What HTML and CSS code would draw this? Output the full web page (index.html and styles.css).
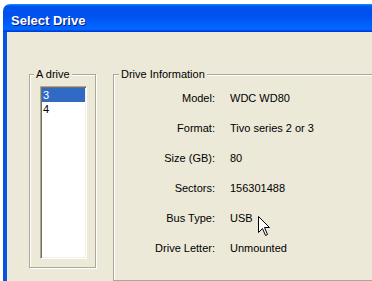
FILE: index.html
```html
<!DOCTYPE html>
<html lang="en">
<head>
  <meta charset="UTF-8">
  <title>Select Drive</title>
  <link rel="stylesheet" href="styles.css">
</head>
<body>
  <div class="window">
    <div class="title-bar">Select Drive</div>
    <div class="client">
      <fieldset class="group drives">
        <legend>A drive</legend>
        <ul class="listbox">
          <li class="selected">3</li>
          <li>4</li>
        </ul>
      </fieldset>

      <fieldset class="group info">
        <legend>Drive Information</legend>
        <div class="info-grid">
          <span class="label">Model:</span><span>WDC WD80</span>
          <span class="label">Format:</span><span>Tivo series 2 or 3</span>
          <span class="label">Size (GB):</span><span>80</span>
          <span class="label">Sectors:</span><span>156301488</span>
          <span class="label">Bus Type:</span><span>USB</span>
          <span class="label">Drive Letter:</span><span>Unmounted</span>
        </div>
      </fieldset>
    </div>
  </div>

  <!-- mouse pointer -->
  <svg class="cursor" width="13" height="21" viewBox="0 0 13 21">
    <polygon points="0.5,0.5 0.5,16.5 4.5,12.5 7.5,19.5 9.5,18.5 6.5,11.5 11.5,11.5" fill="#fff" stroke="#000" stroke-width="1" stroke-linejoin="miter"/>
  </svg>
</body>
</html>
```

FILE: styles.css
```css
body {
  margin: 0;
  background-color: #fff;
  font-family: 'Liberation Sans', Arial, sans-serif;
  font-size: 11px;
  color: #000;
  overflow: hidden;
  height: 281px;
}
.window {
  margin: 4px 0 0 3px;
  width: 369px;
  overflow: hidden;
}
.title-bar {
  width: 380px;
  height: 28px;
  box-sizing: border-box;
  padding: 9px 0 0 8px;
  border-radius: 7px 7px 0 0;
  background: linear-gradient(180deg, #0997ff, #0053ee 8%, #0050ee 40%, #06f 86%, #06f 91%, #005bff 93%, #003dd7 96%, #003dd7);
  color: #fff;
  font-weight: bold;
  font-size: 13px;
  line-height: 16px;
  text-shadow: 1px 1px #0a1883;
}
.client {
  display: flex;
  align-items: stretch;
  height: 249px;
  box-sizing: border-box;
  padding: 36px 0 0 22px;
  background-color: #ece9d8;
  border-left: 4px solid #0855dd;
  box-shadow: inset 1px 0 #eeece0;
  overflow: hidden;
}
.group {
  margin: 0;
  border: 1px solid #aca899;
  box-shadow: inset 1px 1px 0 #fff, 1px 1px 0 #fff;
  align-self: flex-start;
}
.group legend {
  padding: 0 2px;
  line-height: 13px;
  background-color: #ece9d8;
}
.drives {
  width: 67px;
  flex: none;
  box-sizing: border-box;
  padding: 0 0 8px 4px;
}
.listbox {
  list-style: none;
  margin: 5px 0 0 6px;
  padding: 0;
  width: 47px;
  height: 173px;
  box-sizing: border-box;
  background-color: #fff;
  border: 1px solid;
  border-color: #aca899 #fff #fff #aca899;
  box-shadow: inset 1px 1px 0 #716f64, inset -1px -1px 0 #f1efe2;
  padding: 1px;
}
.listbox li {
  height: 14px;
  line-height: 14px;
  padding-left: 1px;
}
.listbox .selected {
  background-color: #316ac5;
  color: #fff;
}
.info {
  margin-left: 17px;
  width: 280px;
  flex: none;
  align-self: stretch;
  box-sizing: border-box;
  padding: 2px 0 0 5px;
}
.info-grid {
  display: grid;
  grid-template-columns: 96px auto;
  grid-auto-rows: 30px;
  column-gap: 15px;
  align-items: center;
}
.label {
  text-align: right;
}
.cursor {
  position: absolute;
  left: 258px;
  top: 216px;
}
```
